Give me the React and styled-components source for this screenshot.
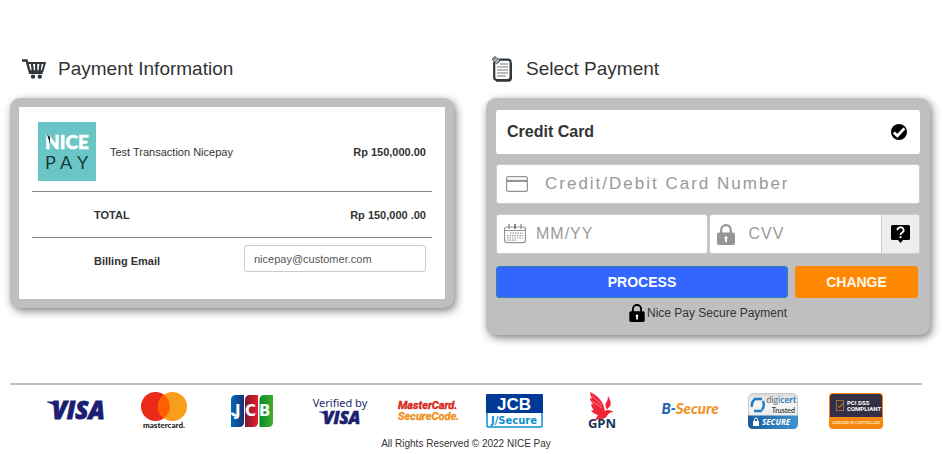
import React, { useState } from "react";
import styled, { createGlobalStyle } from "styled-components";

const App = () => {
  const [email, setEmail] = useState("nicepay@customer.com");
  const [cardNumber, setCardNumber] = useState("");
  const [expiry, setExpiry] = useState("");
  const [cvv, setCvv] = useState("");

  const onSubmit = (e) => {
    e.preventDefault();
  };

  return (
    <>
      <GlobalStyle />
      <Page>
        <Columns>
          <section>
            <Heading $indent={12}>
              <CartIcon />
              Payment Information
            </Heading>
            <InfoCard>
              <InfoBody>
                <InfoTable>
                  <tbody>
                    <tr>
                      <LogoCell>
                        <NicepayLogo />
                      </LogoCell>
                      <NameCell>Test Transaction Nicepay</NameCell>
                      <AmountCell>Rp 150,000.00</AmountCell>
                    </tr>
                    <TotalRow>
                      <LabelCell colSpan="2">TOTAL</LabelCell>
                      <AmountCell>Rp 150,000 .00</AmountCell>
                    </TotalRow>
                    <EmailRow>
                      <LabelCell colSpan="2">
                        <label htmlFor="email">Billing Email</label>
                      </LabelCell>
                      <EmailCell>
                        <EmailInput id="email" type="email" value={email} onChange={(e) => setEmail(e.target.value)} />
                      </EmailCell>
                    </EmailRow>
                  </tbody>
                </InfoTable>
              </InfoBody>
            </InfoCard>
          </section>

          <section>
            <Heading $indent={6}>
              <NoteIcon />
              Select Payment
            </Heading>
            <PayCard onSubmit={onSubmit}>
              <MethodButton type="button">
                Credit Card
                <CheckIcon />
              </MethodButton>
              <Field>
                <FieldIcon htmlFor="cardNumber" $width={48}>
                  <CardIcon />
                </FieldIcon>
                <FieldInput
                  id="cardNumber"
                  $wide
                  aria-label="Credit/Debit Card Number"
                  placeholder="Credit/Debit Card Number"
                  value={cardNumber}
                  onChange={(e) => setCardNumber(e.target.value)}
                />
              </Field>
              <FieldRow>
                <Field>
                  <FieldIcon htmlFor="expiry" $width={39}>
                    <CalendarIcon />
                  </FieldIcon>
                  <FieldInput id="expiry" aria-label="MM/YY" placeholder="MM/YY" value={expiry} onChange={(e) => setExpiry(e.target.value)} />
                </Field>
                <Field>
                  <FieldIcon htmlFor="cvv" $width={39}>
                    <LockIcon color="#959595" width="18" height="21" />
                  </FieldIcon>
                  <FieldInput id="cvv" aria-label="CVV" placeholder="CVV" value={cvv} onChange={(e) => setCvv(e.target.value)} />
                  <HelpButton type="button" aria-label="CVV">
                    <HelpIcon />
                  </HelpButton>
                </Field>
              </FieldRow>
              <Actions>
                <ProcessButton type="submit">PROCESS</ProcessButton>
                <ChangeButton type="button">CHANGE</ChangeButton>
              </Actions>
              <Secure>
                <LockIcon color="#000" width="16" height="18" />
                Nice Pay Secure Payment
              </Secure>
            </PayCard>
          </section>
        </Columns>

        <Footer>
          <Logos>
            <VisaLogo />
            <MastercardLogo />
            <JcbLogo />
            <VerifiedLogo />
            <SecureCodeLogo />
            <JSecureLogo />
            <GpnLogo />
            <BSecureLogo />
            <DigicertLogo />
            <PciLogo />
          </Logos>
          <Copyright>All Rights Reserved © 2022 NICE Pay</Copyright>
        </Footer>
      </Page>
    </>
  );
};

export default App;

//icons
const CartIcon = () => (
  <svg width="24" height="20" viewBox="0 0 24 20" fill="none" stroke="#30373d">
    <path d="M0 1.5h4.600l3.400 12.300h12.600" strokeWidth="2.400" />
    <path d="M5.200 4h17.600l-2.400 8.200H7.800" strokeWidth="2" />
    <path d="M9.800 4l1 8M14.200 4v8M18.600 4l-1 8" strokeWidth="2.200" />
    <circle cx="11" cy="17.600" r="2.200" fill="#30373d" stroke="none" />
    <circle cx="17.800" cy="17.600" r="2.200" fill="#30373d" stroke="none" />
  </svg>
);

const NoteIcon = () => (
  <svg width="22" height="26" viewBox="0 0 22 26" fill="none">
    <rect x="2.200" y="3.600" width="16.400" height="20.400" rx="3" fill="#fff" stroke="#30373d" strokeWidth="2.200" />
    <path d="M19.300 7v15q0 3-3 3H4" stroke="#30373d" strokeWidth="1.400" />
    <path d="M8 8h8M5 11h11M5 14h11M5 17h11M5 20h9" stroke="#777" strokeWidth="1.200" />
    <path d="M0 3l3-2.600 5 4.600-3.400 3z" fill="#899096" stroke="#4a5157" strokeWidth=".8" />
    <path d="M1 6l5-5M4 7l3-4" stroke="#d5d8da" strokeWidth=".8" />
  </svg>
);

const CheckIcon = () => (
  <svg width="16" height="16" viewBox="0 0 16 16">
    <circle cx="8" cy="8" r="8" fill="#000" />
    <path d="M2.800 8.400l3.600 3.400 7-7.400" fill="none" stroke="#fff" strokeWidth="2.800" />
  </svg>
);

const CardIcon = () => (
  <svg width="22" height="16" viewBox="0 0 22 16">
    <rect x=".6" y=".6" width="20.800" height="14.800" rx="2" fill="none" stroke="#959595" strokeWidth="1.200" />
    <path d="M.6 4.900h20.800" stroke="#959595" strokeWidth="2.200" />
  </svg>
);

const CalendarIcon = () => (
  <svg width="22" height="20" viewBox="0 0 22 20" fill="none" stroke="#959595">
    <rect x=".6" y="3" width="20.800" height="15.600" rx="2" strokeWidth="1.200" />
    <path d="M1 6.500h20" strokeWidth="1" />
    <path d="M5 0v5M17 0v5" strokeWidth="1.400" />
    <path d="M11 0v5" stroke="#555" strokeWidth="1.400" />
    <path d="M6 9.200h13M3 11.600h16M3 14h16M3 16.200h10" strokeWidth="1.200" strokeDasharray="1.500 1" />
  </svg>
);

const LockIcon = ({ color, ...rest }) => (
  <svg viewBox="0 0 18 21" {...rest}>
    <path d="M4.200 10V6a4.800 4.800 0 0 1 9.600 0v4" fill="none" stroke={color} strokeWidth="2.200" />
    <rect x="0" y="8.600" width="18" height="12.400" rx="2" fill={color} />
    <path d="M9 12.200a1.600 1.600 0 0 1 1 2.800v3H8v-3a1.600 1.600 0 0 1 1-2.800z" fill="#fff" />
  </svg>
);

const HelpIcon = () => (
  <svg width="19" height="18" viewBox="0 0 19 18">
    <path d="M1.500 0h16Q19 0 19 1.500v12q0 1.500-1.500 1.500H12l-2.500 3L7 15H1.500Q0 15 0 13.500v-12Q0 0 1.500 0z" fill="#000" />
    <path d="M6.400 5.200a3.100 2.900 0 1 1 4.600 2.500q-1.500.8-1.500 2.200" fill="none" stroke="#fff" strokeWidth="1.800" />
    <circle cx="9.500" cy="12.200" r="1.100" fill="#fff" />
  </svg>
);

//logos
const NicepayLogo = () => (
  <svg width="58" height="59" viewBox="0 0 58 59" fontFamily="Lato, sans-serif">
    <rect width="58" height="59" fill="#6ac6c6" />
    <text x="7" y="27" fontSize="19" fontWeight="900" fill="#fff" stroke="#fff" strokeWidth=".5">
      NICE
    </text>
    <path d="M9 12l3 3v7z" fill="#111" />
    <text x="7 22 39" y="47" fontSize="18" fill="#17393a">
      PAY
    </text>
  </svg>
);

const VisaLogo = () => (
  <svg width="60" height="22" viewBox="0 0 60 22" fill="#1a1f71">
    <path d="M0 1.500h7q2 0 2.600 2L11 10Q7 4 0 2.200z" />
    <text
      x="5"
      y="19"
      fontSize="24"
      fontWeight="800"
      fontStyle="italic"
      fontFamily="Open Sans, sans-serif"
      stroke="#1a1f71"
      strokeWidth=".9"
    >
      VISA
    </text>
  </svg>
);

const MastercardLogo = () => (
  <svg width="46" height="38" viewBox="0 0 46 38">
    <circle cx="14.500" cy="14.500" r="14.500" fill="#eb2a18" />
    <circle cx="31.500" cy="14.500" r="14.500" fill="#f79f1a" />
    <path d="M23 2.800a14.500 14.500 0 0 1 0 23.400 14.500 14.500 0 0 1 0-23.400z" fill="#ff5f00" />
    <text x="23" y="36" fontSize="8" fontWeight="900" fontFamily="Lato, sans-serif" textAnchor="middle" fill="#222">
      mastercard.
    </text>
  </svg>
);

const JcbLogo = () => (
  <svg width="42" height="32" viewBox="0 0 42 32">
    <defs>
      <linearGradient id="jcbBlue">
        <stop offset="0" stopColor="#006cb9" />
        <stop offset="1" stopColor="#1b2f73" />
      </linearGradient>
      <linearGradient id="jcbRed">
        <stop offset="0" stopColor="#7c1a33" />
        <stop offset="1" stopColor="#ea1c2c" />
      </linearGradient>
      <linearGradient id="jcbGreen">
        <stop offset="0" stopColor="#0b8a2b" />
        <stop offset="1" stopColor="#3fae2a" />
      </linearGradient>
    </defs>
    <path d="M5 0h8v27q0 5-5 5H0V5q0-5 5-5z" fill="url(#jcbBlue)" />
    <path d="M19 0h8v27q0 5-5 5h-8V5q0-5 5-5z" fill="url(#jcbRed)" />
    <path d="M33.500 0H42v27q0 5-5 5h-8.500V5q0-5 5-5z" fill="url(#jcbGreen)" />
    <text x="4 14 28" y="21" fontSize="15" fontWeight="700" fontFamily="DejaVu Sans, sans-serif" fill="#fff">
      JCB
    </text>
    <path d="M0 17.500h2.500q.5 1.500 3 1.500v2.500Q0 22 0 17.500z" fill="#fff" />
  </svg>
);

const VerifiedLogo = () => (
  <svg width="60" height="34" viewBox="0 0 60 34" fill="#1a1f71">
    <text x="30" y="13" fontSize="11" fontFamily="Noto Sans, sans-serif" textAnchor="middle">
      Verified by
    </text>
    <path d="M9 17.500h5.500l2 5Q14 19 9 18z" />
    <text
      x="13"
      y="30"
      fontSize="17"
      fontWeight="800"
      fontStyle="italic"
      fontFamily="Open Sans, sans-serif"
      stroke="#1a1f71"
      strokeWidth=".6"
    >
      VISA
    </text>
  </svg>
);

const SecureCodeLogo = () => (
  <svg
    width="62"
    height="26"
    viewBox="0 0 62 26"
    fontSize="11"
    fontWeight="700"
    fontStyle="italic"
    fontFamily="Liberation Sans Narrow, Roboto, sans-serif"
    strokeWidth=".4"
  >
    <text x="2" y="11" fill="#d8281c" stroke="#d8281c">
      MasterCard.
    </text>
    <text x="2" y="22" fill="#f0921e" stroke="#f0921e">
      SecureCode.
    </text>
  </svg>
);

const JSecureLogo = () => (
  <svg width="57" height="34" viewBox="0 0 57 34" textAnchor="middle">
    <rect x="1" y="1" width="55" height="32" rx="1" fill="#fff" stroke="#0b8fd0" strokeWidth="1.500" />
    <path d="M1 0h55q1 0 1 1v18H0V1q0-1 1-1z" fill="#003a96" />
    <text x="28" y="16" fontSize="17" fontWeight="700" fontFamily="Liberation Sans, sans-serif" fill="#fff">
      JCB
    </text>
    <text x="28" y="30" fontSize="10" fontWeight="700" fontFamily="DejaVu Sans, sans-serif" fill="#0b8fd0">
      J/Secure
    </text>
  </svg>
);

const GpnLogo = () => (
  <svg width="32" height="38" viewBox="0 0 32 38">
    <text x="16" y="36" fontSize="13" fontWeight="700" fontFamily="Open Sans, sans-serif" textAnchor="middle" fill="#14365c">
      GPN
    </text>
    <path
      d="M4 0q9 4 13 12l2 7q2-1.500 6-.5l2.500 1.500q-4 0-5.500 2.500-3 5.500-9 4.500l-6 2q4-3 5-6-5-1-7-5l3 .5Q5 15 5 12l2.500.5Q4 9 4 6l2 .5Q4 3 4 0z"
      fill="#ee2637"
    />
    <path d="M22 4q3.500 5 2.500 9.500L21 17.500q-2-3-1.500-6Q22 9 22 4z" fill="#ee2637" />
    <path d="M6 4l10 9M6 9l10 7" stroke="#fff" strokeWidth=".4" />
  </svg>
);

const BSecureLogo = () => (
  <svg width="62" height="20" viewBox="0 0 62 20">
    <text x="31" y="13" fontSize="15" fontWeight="900" fontStyle="italic" fontFamily="Lato, sans-serif" textAnchor="middle" fill="#1c62a8">
      B-<tspan fill="#f0932b">Secure</tspan>
    </text>
  </svg>
);

const DigicertLogo = () => (
  <svg width="50" height="36" viewBox="0 0 50 36">
    <defs>
      <linearGradient id="digiTop" x2="0" y2="1">
        <stop offset="0" stopColor="#d8dadc" />
        <stop offset=".3" stopColor="#f6f6f6" />
        <stop offset="1" stopColor="#dcdfe2" />
      </linearGradient>
      <linearGradient id="digiBottom">
        <stop offset="0" stopColor="#1b5c9c" />
        <stop offset="1" stopColor="#3f94cf" />
      </linearGradient>
    </defs>
    <rect x=".5" y=".5" width="49" height="35" rx="5" fill="url(#digiTop)" stroke="#c4c8cc" />
    <path d="M0 22.500h50V31q0 5-5 5H5q-5 0-5-5z" fill="url(#digiBottom)" />
    <path d="M4 14q-1-5 3-8M6 6h8M15 8q2 5-1 9M14 18H6" fill="none" stroke="#1f7dc4" strokeWidth="2.400" />
    <text x="48" y="10" fontSize="9" fontFamily="Lato, sans-serif" textAnchor="end" fill="#666">
      digi<tspan fontWeight="700" fill="#1f7dc4">cert</tspan>
    </text>
    <text x="47" y="20" fontSize="7" fontWeight="600" fontFamily="Lato, sans-serif" textAnchor="end" fill="#333">
      Trusted
    </text>
    <rect x="5" y="28" width="6" height="5" fill="#fff" />
    <path d="M6.500 28v-1.500a1.500 1.500 0 0 1 3 0V28" fill="none" stroke="#fff" />
    <text x="14" y="32" fontSize="8" fontWeight="700" fontStyle="italic" fontFamily="Open Sans, sans-serif" fill="#fff">
      SECURE
    </text>
  </svg>
);

const PciLogo = () => (
  <svg width="54" height="36" viewBox="0 0 54 36" fontFamily="Liberation Sans Narrow, Roboto, sans-serif" fontWeight="700">
    <rect width="54" height="36" rx="4" fill="#f7870f" />
    <path d="M4 1h46q3 0 3 3v20H1V4q0-3 3-3z" fill="#332f45" />
    <rect x="7.500" y="7.500" width="7" height="10" fill="none" stroke="#a06a3c" />
    <path d="M9 12.500l1.500 2 4-5" fill="none" stroke="#e58a35" />
    <text x="18" y="12" fontSize="6" fill="#fff">
      PCI DSS
    </text>
    <text x="18" y="18" fontSize="6" fill="#fff">
      COMPLIANT
    </text>
    <text x="27" y="31" fontSize="3.500" textAnchor="middle" fill="#ffe0b8">
      ASSESSED BY CONTROLCASE
    </text>
  </svg>
);

const GlobalStyle = createGlobalStyle`
  * {
    box-sizing: border-box;
  }
  body {
    margin: 0;
    background: #fff;
    color: #333;
    font-family: "Liberation Sans", Arial, sans-serif;
  }
  svg {
    display: block;
    flex-shrink: 0;
  }
  input,
  button {
    font-family: inherit;
  }
`;

const Page = styled.main`
  padding: 52px 12px 0 10px;
`;

const Columns = styled.div`
  display: grid;
  grid-template-columns: 1fr 1fr;
  align-items: start;
  gap: 32px;
`;

const Heading = styled.h1`
  display: flex;
  align-items: center;
  gap: 12px;
  margin: 0 0 12px;
  padding-left: ${(props) => props.$indent}px;
  font-size: 19px;
  font-weight: normal;
  line-height: 34px;
`;

const InfoCard = styled.div`
  padding: 9px;
  background: #bfbfbf;
  border-radius: 10px;
  box-shadow: 2px 3px 8px rgba(0, 0, 0, 0.5);
`;

const InfoBody = styled.div`
  padding: 15px 13px 27px;
  background: #fff;
`;

const InfoTable = styled.table`
  width: 100%;
  border-spacing: 0;
  font-size: 11px;
`;

const Cell = styled.td`
  padding: 0 6px;
`;

const LogoCell = styled(Cell)`
  width: 78px;
  padding-bottom: 10px;
`;

const NameCell = styled(Cell)`
  padding: 0 0 10px;
`;

const AmountCell = styled(Cell)`
  padding-bottom: 10px;
  font-weight: bold;
  text-align: right;
`;

const LabelCell = styled(Cell)`
  padding-left: 62px;
  font-weight: bold;
`;

const TotalRow = styled.tr`
  height: 47px;

  td {
    padding-bottom: 0;
    border-top: 1px solid #888;
    border-bottom: 1px solid #888;
  }
`;

const EmailRow = styled.tr`
  td {
    padding-top: 7px;
  }
  label {
    display: block;
    padding-top: 5px;
  }
`;

const EmailCell = styled(Cell)`
  width: 188px;
  padding-left: 0;
`;

const EmailInput = styled.input`
  display: block;
  width: 100%;
  height: 27px;
  padding: 0 9px;
  border: 1px solid #ccc;
  border-radius: 3px;
  color: #555;
  font-size: 11px;
`;

const PayCard = styled.form`
  padding: 12px 10px 13px;
  background: #bfbfbf;
  border-radius: 10px;
  box-shadow: 2px 3px 8px rgba(0, 0, 0, 0.5);
`;

const MethodButton = styled.button`
  display: flex;
  justify-content: space-between;
  align-items: center;
  width: 100%;
  height: 44px;
  margin-bottom: 10px;
  padding: 0 13px 0 11px;
  background: #fff;
  border: none;
  border-radius: 3px;
  color: #333;
  font-size: 16px;
  font-weight: bold;
  cursor: pointer;
`;

const Field = styled.div`
  display: flex;
  min-width: 0;
  height: 40px;
  background: #fff;
  border: 1px solid #ccc;
  border-radius: 3px;
`;

const FieldRow = styled.div`
  display: grid;
  grid-template-columns: 1fr 1fr;
  gap: 1px;
  margin: 10px 0 12px;
`;

const FieldIcon = styled.label`
  display: flex;
  align-items: center;
  width: ${(props) => props.$width}px;
  padding-left: ${(props) => (props.$width > 40 ? 9 : 7)}px;
`;

const FieldInput = styled.input`
  flex: 1;
  min-width: 0;
  padding: 0;
  background: transparent;
  border: none;
  outline: none;
  color: #555;
  font-size: ${(props) => (props.$wide ? 17 : 16)}px;
  letter-spacing: ${(props) => (props.$wide ? 2 : 1)}px;

  &::placeholder {
    color: #999;
  }
`;

const HelpButton = styled.button`
  display: flex;
  align-items: center;
  justify-content: center;
  width: 38px;
  padding: 0;
  background: #eee;
  border: none;
  border-left: 1px solid #ccc;
  border-radius: 0 2px 2px 0;
  cursor: pointer;
`;

const Actions = styled.div`
  display: flex;
  gap: 7px;
  padding-right: 2px;
`;

const ActionButton = styled.button`
  height: 32px;
  padding: 0;
  border-radius: 3px;
  font-size: 14px;
  font-weight: bold;
  cursor: pointer;
`;

const ProcessButton = styled(ActionButton)`
  flex: 1;
  background: #3366ff;
  border: 1px solid #2e85a8;
  color: #fff;
`;

const ChangeButton = styled(ActionButton)`
  width: 123px;
  background: #ff8803;
  border: none;
  color: #fff8ea;
`;

const Secure = styled.p`
  display: flex;
  align-items: center;
  justify-content: center;
  gap: 2px;
  margin: 6px 0 0;
  font-size: 12px;
  line-height: 18px;
`;

const Footer = styled.footer`
  margin: 48px 8px 0 0;
  border-top: 2px solid #bfbfbf;
`;

const Logos = styled.div`
  display: grid;
  grid-template-columns: repeat(8, 88fr) 79fr 87fr;
  align-items: center;
  justify-items: center;
  height: 52px;
  padding: 0 23px;
`;

const Copyright = styled.p`
  margin: 0;
  font-size: 10px;
  line-height: 13px;
  text-align: center;
`;
